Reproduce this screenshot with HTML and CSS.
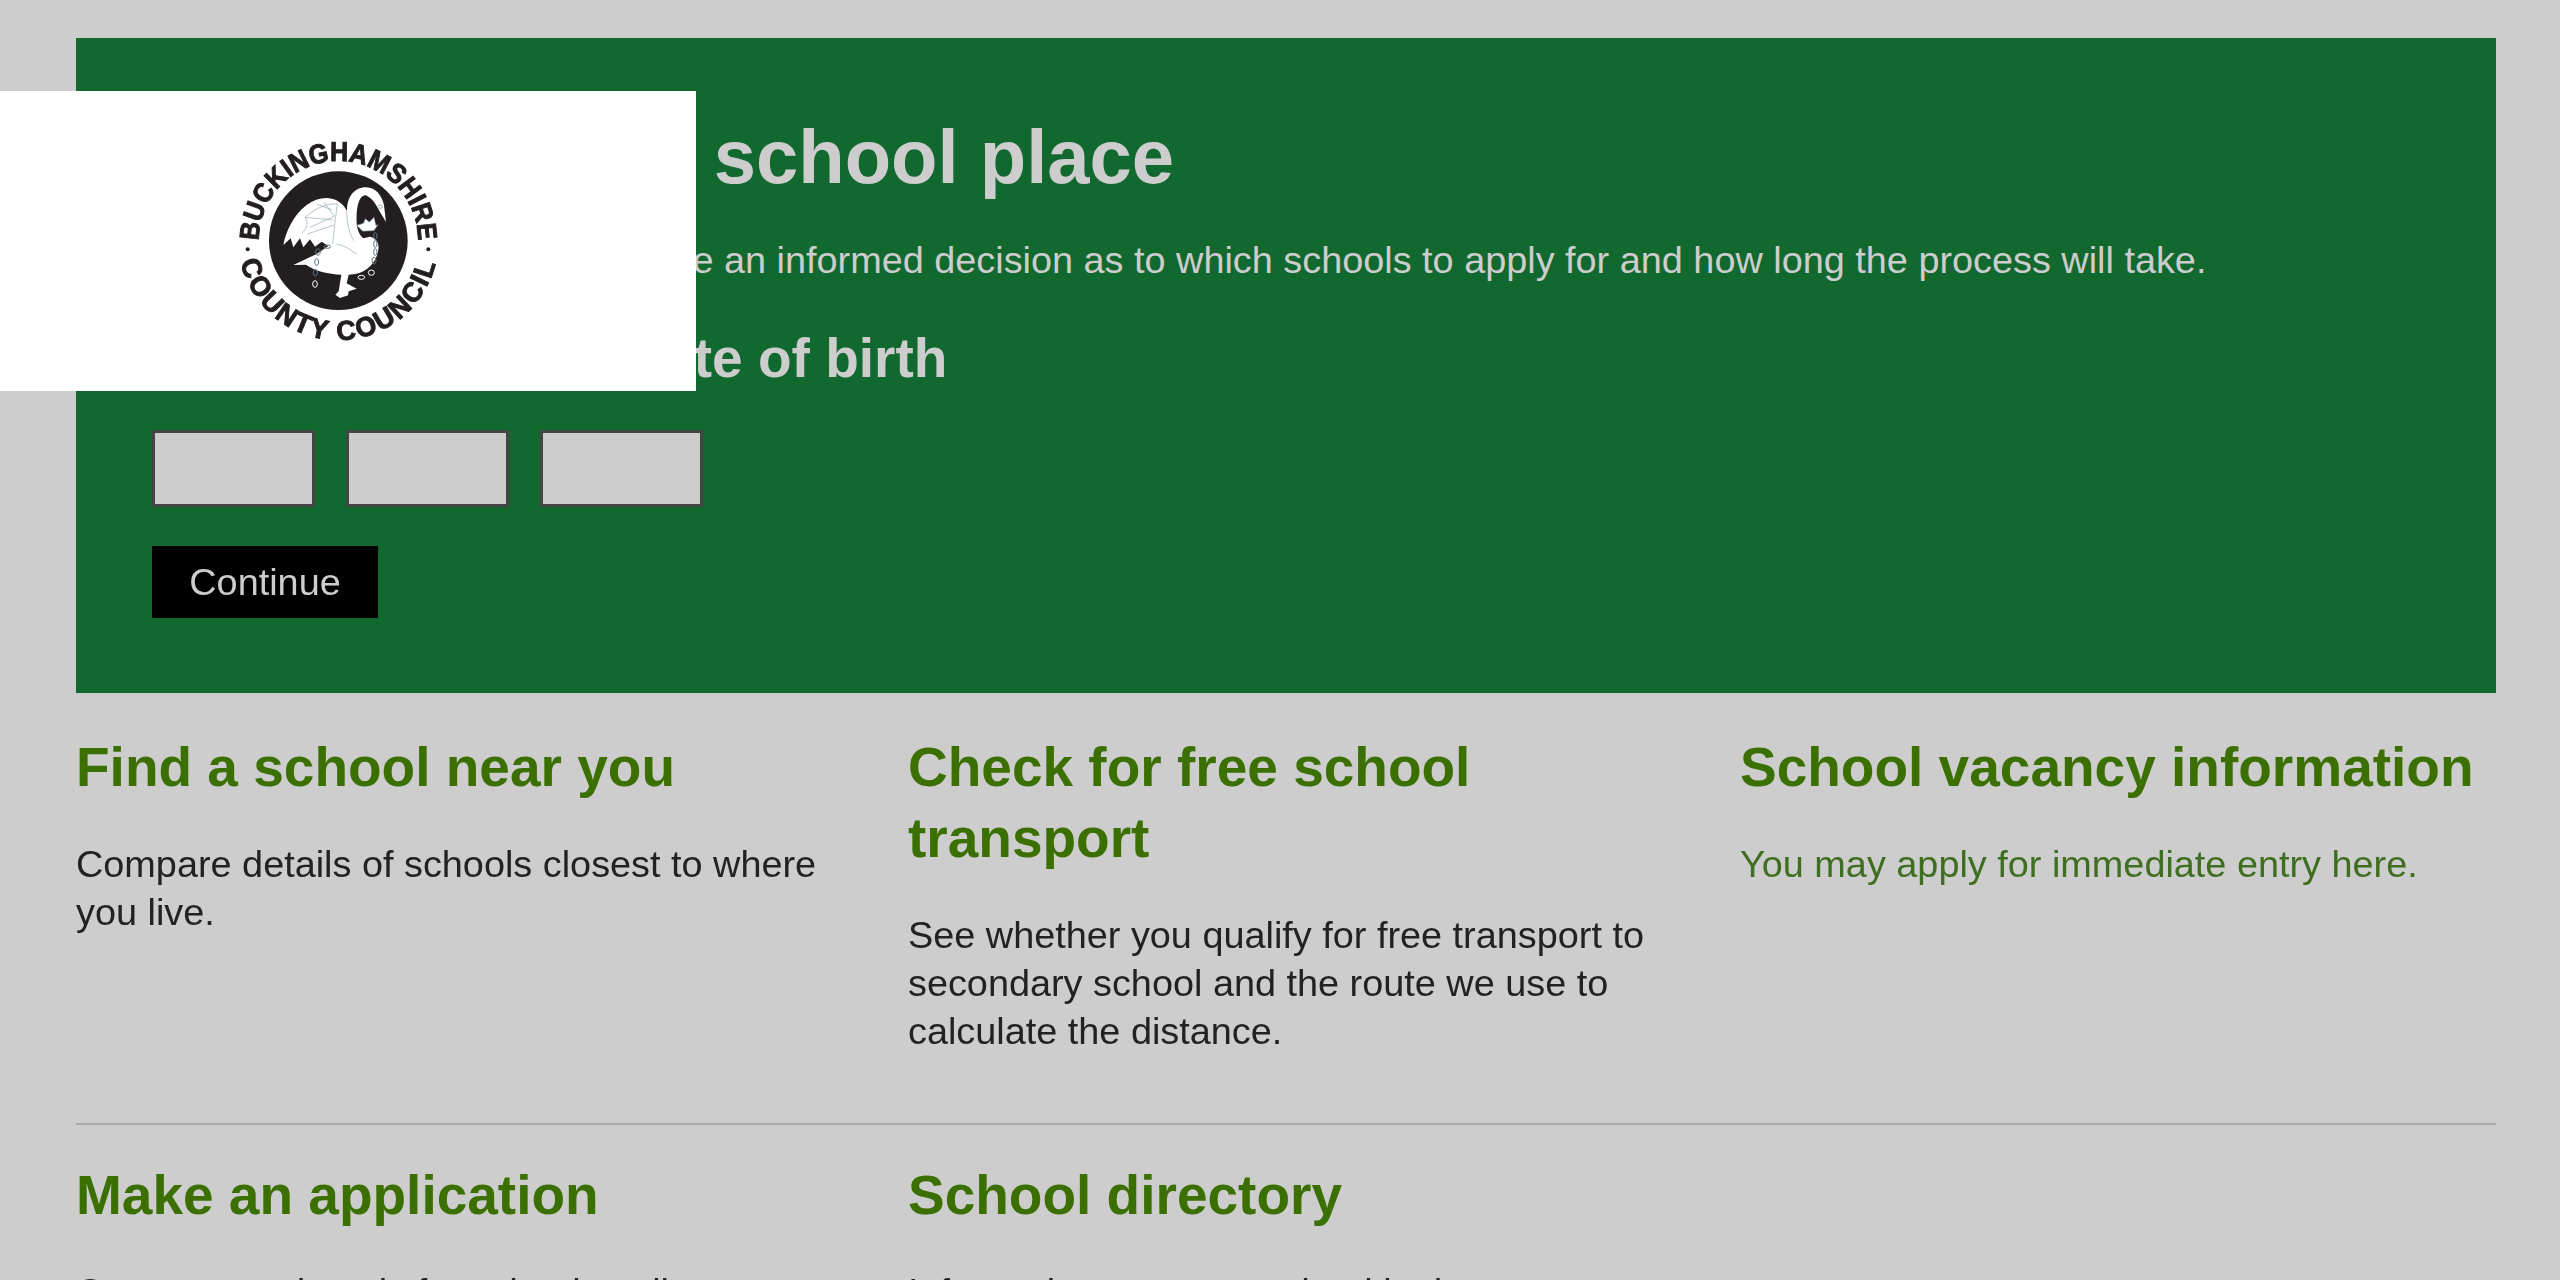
FILE: index.html
```html
<!DOCTYPE html>
<html lang="en">
<head>
<meta charset="utf-8">
<title>Preparing your school place</title>
<link rel="stylesheet" href="styles.css">
</head>
<body>
<main class="page">
  <section class="hero">
    <h1 class="hero-title">Preparing your school place</h1>
    <p class="hero-text">Read this guide to help you make an informed decision as to which schools to apply for and how long the process will take.</p>
    <h2 class="hero-sub">Enter your child's date of birth</h2>
    <form class="dob">
      <div class="dob-fields">
        <input class="dob-input" type="text" aria-label="Day">
        <input class="dob-input" type="text" aria-label="Month">
        <input class="dob-input" type="text" aria-label="Year">
      </div>
      <button class="continue" type="button">Continue</button>
    </form>
  </section>

  <section class="cards cards-first">
    <article class="card">
      <h3 class="card-title">Find a school near you</h3>
      <p class="card-text">Compare details of schools closest to where you live.</p>
    </article>
    <article class="card">
      <h3 class="card-title">Check for free school transport</h3>
      <p class="card-text">See whether you qualify for free transport to secondary school and the route we use to calculate the distance.</p>
    </article>
    <article class="card">
      <h3 class="card-title">School vacancy information</h3>
      <p class="card-text"><a class="card-link" href="#">You may apply for immediate entry here.</a></p>
    </article>
  </section>

  <hr class="divider">

  <section class="cards">
    <article class="card">
      <h3 class="card-title">Make an application</h3>
      <p class="card-text">Compare and apply for schools online.</p>
    </article>
    <article class="card">
      <h3 class="card-title">School directory</h3>
      <p class="card-text">Information on every school in the county.</p>
    </article>
  </section>
</main>

<div class="logo-box">
  <svg class="logo" viewBox="0 0 840 780" width="280" height="260" role="img" aria-label="Buckinghamshire County Council">
    <defs>
      <path id="arc-top" d="M176 392 A239 239 0 0 1 654 392"/>
      <path id="arc-bottom" d="M122 455 A300 300 0 0 0 708 455"/>
    </defs>
    <circle cx="415" cy="392" r="208" fill="#231f20"/>
    <text class="logo-text"><textPath href="#arc-top" textLength="750" lengthAdjust="spacingAndGlyphs">BUCKINGHAMSHIRE</textPath></text>
    <text class="logo-text logo-text-low"><textPath href="#arc-bottom" textLength="812" lengthAdjust="spacingAndGlyphs">COUNTY COUNCIL</textPath></text>
    <circle cx="143" cy="418" r="6" fill="#231f20"/>
    <circle cx="685" cy="418" r="6" fill="#231f20"/>
    <!-- swan -->
    <path fill="#fff" d="M280 465 L350 432 L385 408 L365 395 L345 410 L330 388 L310 412 L300 385 L280 412 L272 385 L250 405 C258 365 280 315 320 285 C350 262 385 258 412 272 C428 282 436 292 441 304 C440 262 462 232 498 232 C528 232 546 258 552 286 L558 336 L540 306 C530 290 522 268 498 256 C482 252 472 280 470 310 C468 345 472 370 490 385 L510 380 C530 385 540 400 534 425 C528 458 500 486 466 492 L446 494 L440 520 L470 536 L446 544 L444 556 L420 564 L406 554 L416 544 L424 494 C385 492 345 484 318 464 Z"/>
    <!-- wing lines -->
    <g fill="none" stroke="#6d8a94" stroke-width="1.500">
      <path d="M316 322 C345 295 380 280 412 282 L406 328 L398 402"/>
      <path d="M316 322 C325 345 320 355 308 368 M316 322 L400 330 M330 352 L404 318 M322 372 L402 345 M350 282 L396 300 M372 276 L402 318 M440 304 C442 340 446 370 462 392"/>
      <path d="M410 402 C440 408 458 425 470 432"/>
    </g>
    <!-- crown -->
    <path fill="#fff" stroke="#5d7480" stroke-width="2" d="M470 346 L490 340 L496 326 L508 336 L522 322 L528 346 L534 344 L522 362 L488 364 Z"/>
    <!-- chains -->
    <g fill="none" stroke="#fff" stroke-width="3">
      <ellipse cx="345" cy="522" rx="7" ry="10"/>
      <ellipse cx="458" cy="484" rx="9" ry="6"/>
      <ellipse cx="484" cy="502" rx="10" ry="6"/>
      <ellipse cx="514" cy="488" rx="9" ry="8"/>
    </g>
    <g fill="none" stroke="#5d7480" stroke-width="3">
      <ellipse cx="382" cy="410" rx="10" ry="5"/>
      <ellipse cx="354" cy="426" rx="7" ry="10"/>
      <ellipse cx="350" cy="456" rx="6" ry="10"/>
      <ellipse cx="346" cy="488" rx="6" ry="10"/>
      <ellipse cx="526" cy="378" rx="5" ry="10"/>
      <ellipse cx="526" cy="402" rx="5" ry="10"/>
      <ellipse cx="526" cy="426" rx="5" ry="10"/>
      <ellipse cx="522" cy="452" rx="6" ry="10"/>
    </g>
    <ellipse cx="540" cy="290" rx="8" ry="5" fill="#fff" stroke="#5d7480" stroke-width="1.500"/>
  </svg>
</div>
</body>
</html>
```

FILE: styles.css
```css
* { box-sizing: border-box; }
html, body { margin: 0; height: 1280px; overflow: hidden; }
body {
  background: #cdcdcd;
  color: #222;
  font-family: "Liberation Sans", Arial, sans-serif;
}
.page { padding: 38px 64px 0 76px; filter: blur(0.6px); }

.hero {
  background: #11692f;
  color: #cdcdcd;
  height: 655px;
  padding: 74px 76px 0;
}
.hero-title {
  margin: 0;
  font-size: 76px;
  line-height: 90px;
  font-weight: 700;
}
.hero-text {
  margin: 34px 0 0;
  font-size: 37.850px;
  line-height: 48px;
}
.hero-sub {
  margin: 42px 0 0;
  font-size: 55px;
  line-height: 64px;
  font-weight: 700;
}
.dob { margin-top: 40px; }
.dob-fields { display: flex; gap: 31px; }
.dob-input {
  width: 163px;
  height: 77px;
  background: #cdcdcd;
  border: 3px solid #444;
  border-radius: 0;
  padding: 0;
}
.continue {
  display: block;
  margin-top: 39px;
  width: 226px;
  height: 72px;
  background: #000;
  color: #cdcdcd;
  border: 0;
  font: 37.850px "Liberation Sans", Arial, sans-serif;
  padding: 0;
}

.cards {
  display: grid;
  grid-template-columns: repeat(3, 756px);
  column-gap: 76px;
}
.cards-first { margin-top: 4px; }
.card { padding-top: 35px; }
.card-title {
  margin: 0;
  font-size: 55px;
  line-height: 71px;
  font-weight: 700;
  color: #3b7000;
}
.card-text {
  margin: 37px 0 0;
  font-size: 37.850px;
  line-height: 48px;
}
.card-link { color: #3e6e1f; text-decoration: none; }

.divider {
  margin: 68px 0 0;
  border: 0;
  height: 2px;
  background: #aaa;
}

.logo-box {
  position: absolute;
  left: 0;
  top: 91px;
  width: 696px;
  height: 300px;
  background: #fff;
  padding: 19px 0 0 200px;
}
.logo { display: block; filter: blur(0.3px); }
.logo-text {
  font: 700 82px "Liberation Sans", Arial, sans-serif;
  fill: #231f20;
  stroke: #231f20;
  stroke-width: 3px;
}
.logo-text-low { letter-spacing: 6px; }
```
